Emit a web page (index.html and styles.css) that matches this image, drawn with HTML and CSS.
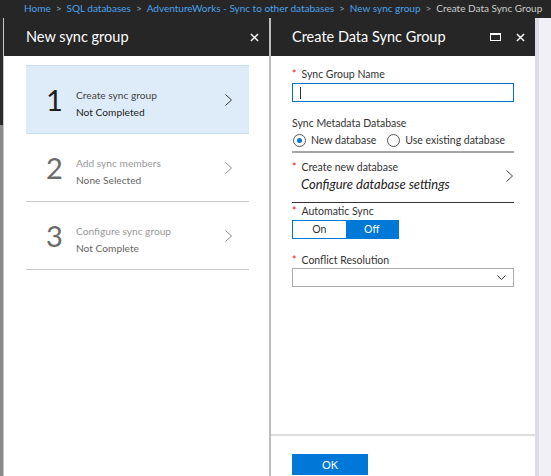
FILE: index.html
```html
<!DOCTYPE html>
<html>
<head>
  <meta charset="utf-8">
  <title>Create Data Sync Group</title>
  <link rel="stylesheet" href="styles.css">
</head>
<body>
  <div class="breadcrumb">
    <a>Home</a><span class="sep">&gt;</span>
    <a>SQL databases</a><span class="sep">&gt;</span>
    <a>AdventureWorks - Sync to other databases</a><span class="sep">&gt;</span>
    <a>New sync group</a><span class="sep">&gt;</span>
    <span class="current">Create Data Sync Group</span>
  </div>

  <div class="blades">
    <div class="edge"></div>

    <div class="blade steps-blade">
      <div class="blade-header">
        <span class="blade-title">New sync group</span>
        <div class="header-actions">
          <svg class="close-icon" viewBox="0 0 10 10"><path d="M1,1L9,9M9,1L1,9"/></svg>
        </div>
      </div>
      <div class="steps">
        <div class="step active">
          <div class="step-num">1</div>
          <div class="step-text">
            <div class="step-title">Create sync group</div>
            <div class="step-status">Not Completed</div>
          </div>
          <svg class="chevron" viewBox="0 0 7 12"><path d="M0.5,0.5L6.5,6L0.5,11.5"/></svg>
        </div>
        <div class="step">
          <div class="step-num">2</div>
          <div class="step-text">
            <div class="step-title">Add sync members</div>
            <div class="step-status">None Selected</div>
          </div>
          <svg class="chevron" viewBox="0 0 7 12"><path d="M0.5,0.5L6.5,6L0.5,11.5"/></svg>
        </div>
        <div class="step">
          <div class="step-num">3</div>
          <div class="step-text">
            <div class="step-title">Configure sync group</div>
            <div class="step-status">Not Complete</div>
          </div>
          <svg class="chevron" viewBox="0 0 7 12"><path d="M0.5,0.5L6.5,6L0.5,11.5"/></svg>
        </div>
      </div>
    </div>

    <div class="blade form-blade">
      <div class="blade-header">
        <span class="blade-title">Create Data Sync Group</span>
        <div class="header-actions">
          <svg class="max-icon" viewBox="0 0 11 8"><rect x="0.5" y="0.5" width="10" height="7"/><path d="M0,1.5H11"/></svg>
          <svg class="close-icon" viewBox="0 0 10 10"><path d="M1,1L9,9M9,1L1,9"/></svg>
        </div>
      </div>

      <div class="form">
        <div class="field">
          <label class="required">Sync Group Name</label>
          <div class="text-input"><span class="caret"></span></div>
        </div>

        <div class="field metadata">
          <label>Sync Metadata Database</label>
          <div class="radios">
            <span class="radio checked"></span><span class="radio-label">New database</span>
            <span class="radio"></span><span class="radio-label">Use existing database</span>
          </div>
        </div>

        <div class="picker">
          <div class="picker-text">
            <label class="required">Create new database</label>
            <div class="picker-value">Configure database settings</div>
          </div>
          <svg class="chevron" viewBox="0 0 7 12"><path d="M0.5,0.5L6.5,6L0.5,11.5"/></svg>
        </div>

        <div class="field">
          <label class="required">Automatic Sync</label>
          <div class="toggle">
            <span class="toggle-opt">On</span>
            <span class="toggle-opt selected">Off</span>
          </div>
        </div>

        <div class="field">
          <label class="required">Conflict Resolution</label>
          <div class="select">
            <svg class="select-arrow" viewBox="0 0 9 5"><path d="M0.5,0.5L4.5,4.5L8.5,0.5"/></svg>
          </div>
        </div>
      </div>

      <div class="blade-footer">
        <button class="ok-button">OK</button>
      </div>
    </div>

    <div class="backdrop"></div>
  </div>
</body>
</html>
```

FILE: styles.css
```css
body {
  width: 551px;
  height: 476px;
  margin: 0;
  overflow: hidden;
  font-family: Lato, "Open Sans", sans-serif;
  display: flex;
  flex-direction: column;
  background: #f0f0f6;
}
.breadcrumb {
  height: 18px;
  flex-shrink: 0;
  background: #262626;
  padding-left: 24px;
  display: flex;
  gap: 5px;
  font-size: 10px;
  line-height: 17px;
  white-space: nowrap;
  overflow: hidden;
  color: #4ca3ec;
}
.breadcrumb .sep {
  color: #a0a0a0;
}
.breadcrumb .current {
  color: #cccccc;
}
.blades {
  flex: 1;
  display: flex;
}
.edge {
  width: 3px;
  background: linear-gradient(#2a2a2a 0 107px, #8a8a8a 107px);
  border-right: 1px solid #c8c8c8;
}
.blade {
  display: flex;
  flex-direction: column;
  background: white;
}
.steps-blade {
  width: 265px;
  border-right: 2px solid #bdbdbd;
}
.form-blade {
  width: 264px;
}
.backdrop {
  flex: 1;
  background: #f0f0f6;
  border-left: 4px solid #dcdce4;
}
.blade-header {
  height: 38px;
  flex-shrink: 0;
  background: #262626;
  display: flex;
  align-items: center;
  justify-content: space-between;
  padding: 0 10px 0 22px;
  color: white;
}
.form-blade .blade-header {
  padding-left: 21px;
}
.blade-title {
  font-size: 14.5px;
  margin-top: -2px;
}
.header-actions {
  display: flex;
  align-items: center;
  gap: 15px;
}
.close-icon {
  width: 9px;
  height: 9px;
  stroke: white;
  stroke-width: 1.6;
  fill: none;
}
.max-icon {
  width: 11px;
  height: 8px;
  stroke: white;
  stroke-width: 1;
  fill: none;
}
.steps {
  padding: 9px 0 0 22px;
  width: 223px;
}
.step {
  height: 67px;
  display: flex;
  align-items: center;
  border-bottom: 1px solid #c8c8c8;
  color: #999;
}
.step.active {
  background: #deecf9;
  border-top: 1px solid #c7ddf0;
  border-bottom: 1px solid #c7ddf0;
  color: #444;
}
.step-num {
  width: 50px;
  padding-left: 20px;
  box-sizing: border-box;
  font-size: 29px;
  color: #6a6a6a;
}
.step.active .step-num {
  color: #1e1e1e;
}
.step-text {
  flex: 1;
  font-size: 10.2px;
  line-height: 17px;
  padding-top: 9px;
}
.step-status {
  color: #666;
}
.step.active .step-status {
  color: #222;
}
.chevron {
  width: 7px;
  height: 12px;
  stroke: #444;
  stroke-width: 1;
  fill: none;
  margin-right: 17px;
}
.step .chevron {
  stroke: #888;
}
.step.active .chevron {
  stroke: #333;
}
.form {
  flex: 1;
  padding: 10px 0 0 21px;
  width: 222px;
  font-size: 10.5px;
  color: #333;
}
.field {
  margin-bottom: 13px;
}
label {
  display: block;
  line-height: 16px;
  color: #333;
}
label.required::before {
  content: "*";
  color: #e81123;
  margin-right: 5px;
}
.text-input {
  height: 17px;
  border: 1px solid #0072c6;
  margin-top: 1px;
  display: flex;
  align-items: center;
  padding-left: 7px;
}
.caret {
  width: 1px;
  height: 12px;
  background: #333;
}
.metadata {
  margin-top: 11px;
  margin-bottom: 0;
  padding-bottom: 2px;
  border-bottom: 2px solid #a6a6a6;
}
.radios {
  display: flex;
  align-items: center;
  height: 18px;
  white-space: nowrap;
}
.radio {
  width: 11px;
  height: 11px;
  flex-shrink: 0;
  border: 1px solid #555;
  border-radius: 50%;
  margin: 0 5px 0 1px;
  position: relative;
}
.radio.checked::after {
  content: "";
  position: absolute;
  left: 3px;
  top: 3px;
  width: 5px;
  height: 5px;
  border-radius: 50%;
  background: #0078d7;
}
.radio-label {
  margin-right: 10px;
}
.picker {
  display: flex;
  align-items: center;
  padding: 6px 0 9px;
  border-bottom: 1px solid #333;
}
.picker-text {
  flex: 1;
}
.picker-value {
  font-style: italic;
  font-size: 13px;
  line-height: 18px;
  padding-left: 9px;
  color: #222;
}
.picker .chevron {
  margin-right: 1px;
}
.toggle {
  display: flex;
  width: 107px;
  height: 19px;
  margin-top: 1px;
  border: 1px solid #0078d7;
  box-sizing: border-box;
}
.toggle-opt {
  flex: 1;
  text-align: center;
  line-height: 17px;
  color: #333;
}
.toggle-opt.selected {
  background: #0078d7;
  color: white;
}
.select {
  height: 17px;
  border: 1px solid #ababab;
  margin-top: 0;
  display: flex;
  align-items: center;
  justify-content: flex-end;
  padding-right: 7px;
}
.select-arrow {
  width: 9px;
  height: 5px;
  stroke: #333;
  stroke-width: 1;
  fill: none;
}
.blade-footer {
  height: 42px;
  flex-shrink: 0;
  border-top: 2px solid #dddddd;
  padding: 17px 0 0 21px;
  box-sizing: border-box;
}
.ok-button {
  width: 76px;
  height: 21px;
  border: none;
  background: #0078d7;
  color: white;
  font-family: inherit;
  font-size: 11px;
  padding: 0;
}
```
